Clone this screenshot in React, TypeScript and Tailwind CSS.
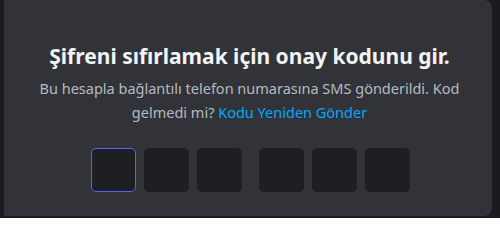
export default function App() {
  const slots = [0, 1, 2, 3, 4, 5];
  return (
    <div className="h-[218px] w-[500px] overflow-hidden bg-[#1a1b1e] pl-[4px] pr-[8px] font-['Noto_Sans','Open_Sans',sans-serif]">
      <div className="flex h-[216px] flex-col items-center rounded-r-lg bg-[#313338] pl-[3px] pt-[42px]">
        <h1 className="text-[21px] font-bold leading-[28px] text-[#f2f3f5]">
          Şifreni sıfırlamak için onay kodunu gir.
        </h1>
        <p className="mt-[6px] w-[440px] text-center text-[14.5px] leading-[24px] text-[#b5bac1]">
          Bu hesapla bağlantılı telefon numarasına SMS gönderildi. Kod gelmedi mi?{" "}
          <span className="text-[#00a8fc]">Kodu Yeniden Gönder</span>
        </p>
        <div className="ml-[1px] mt-[24px] flex items-center">
          {slots.map((i) => (
            <div
              key={i}
              className={
                (i === 0
                  ? "border-[1.5px] border-[#5865f2] "
                  : "border border-[#1e1f22] ") +
                (i === 3 ? "ml-[17px] " : i > 0 ? "ml-[8px] " : "") +
                "h-[44px] w-[45px] rounded-[5px] bg-[#1e1f22]"
              }
            />
          ))}
        </div>
      </div>
    </div>
  );
}
